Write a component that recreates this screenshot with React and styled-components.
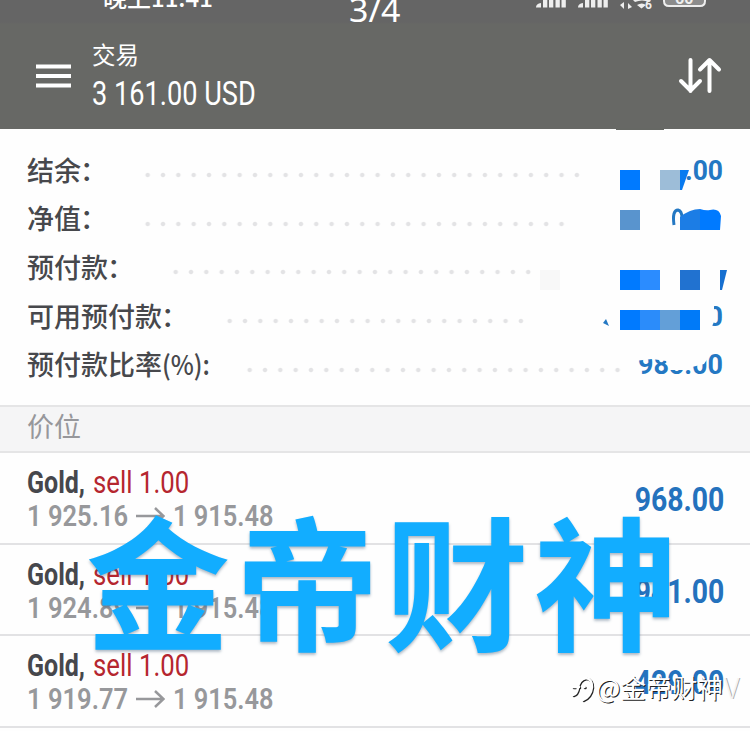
import React from 'react';
import styled, { createGlobalStyle } from 'styled-components';

const Global = createGlobalStyle`
  * { box-sizing: border-box; }
  body { margin: 0; background: #fefefe; overflow: hidden; }
`;

const latin = '"Roboto", "Noto Sans CJK SC", sans-serif';
const cjk = '"Noto Sans CJK SC", sans-serif';

const Screen = styled.main`
  position: relative;
  width: 750px;
  height: 731px;
  overflow: hidden;
  background: #fefefe;
  font-family: ${latin};
`;

const Header = styled.header`
  height: 129px;
  background: linear-gradient(#656565 0 22px, #676865 24px);
  color: #fff;
  overflow: hidden;
`;

const StatusBar = styled.div`
  height: 32px;
  position: relative;
`;

const Clock = styled.span`
  position: absolute;
  left: 103px;
  top: -19px;
  font: 500 24px/32px ${cjk};
  white-space: nowrap;
`;

const Counter = styled.span`
  position: absolute;
  left: 349px;
  top: -10px;
  font: 400 33px/40px "Noto Sans", sans-serif;
  transform: scaleX(1.03);
  transform-origin: left;
`;

const StatusIcons = styled.svg`
  position: absolute;
  left: 530px;
  top: 0;
`;

const Toolbar = styled.div`
  display: flex;
  align-items: flex-start;
  padding: 6px 28px 0 36px;
`;

const MenuIcon = styled.svg`
  margin-top: 25px;
`;

const Titles = styled.div`
  flex: 1;
  margin-left: 21px;
`;

const Title = styled.div`
  font: 400 23.5px/32px ${cjk};
`;

const Balance = styled.div`
  font-size: 33.5px;
  line-height: 48px;
`;

const SortIcon = styled.svg`
  margin-top: 18px;
`;

const Fit = styled.span`
  display: inline-block;
  white-space: pre;
  transform: scaleX(${p => p.$x});
  transform-origin: ${p => p.$from || 'left'} center;
`;

const Summary = styled.section`
  position: relative;
  height: 276px;
  padding-top: 16.5px;
`;

const SummaryRow = styled.div`
  height: 48.6px;
  display: flex;
  align-items: center;
`;

const Label = styled.div`
  width: ${p => p.$w}px;
  padding-left: 27px;
  font: 500 27px/48px ${cjk};
  color: #47484c;
  white-space: nowrap;
`;

const Colon = styled.span`
  margin-left: -1px;
`;

const Dots = styled.div`
  width: ${p => p.$n * 15.33}px;
  height: 6px;
  margin-top: 11px;
  background: radial-gradient(circle, #e3e3e5 0 1.7px, transparent 2.7px) 0 0 / 15.33px 6px repeat-x;
`;

const Redaction = styled.svg`
  position: absolute;
  left: 530px;
  top: -1px;
  font: 700 28px "Roboto", sans-serif;
`;

const SectionTitle = styled.h2`
  height: 48px;
  margin: 0;
  padding-left: 27px;
  border-top: 2px solid #e5e5e6;
  border-bottom: 2px solid #e5e5e6;
  background: #f5f5f6;
  font: 400 27px/38px ${cjk};
  color: #97979b;
`;

const Position = styled.article`
  height: 91.7px;
  display: flex;
  justify-content: space-between;
  padding: 12px 26px 0 27px;
  border-bottom: 2px solid #e2e2e4;
`;

const Deal = styled.div`
  font-size: 30.5px;
  line-height: 36px;
  height: 36px;
  display: flex;
  color: #46474c;
`;

const Part = styled.div`
  width: ${p => p.$w}px;
  white-space: nowrap;
  font-weight: ${p => p.$bold ? 700 : 400};
  color: ${p => p.$sell ? '#b5262f' : 'inherit'};
`;

const Prices = styled.div`
  display: flex;
  font-size: 29.5px;
  font-weight: 600;
  line-height: 30px;
  color: #97989b;
`;

const Price = styled.div`
  width: ${p => p.$w}px;
`;

const Arrow = styled.svg`
  flex: none;
  margin-right: 8px;
`;

const Amount = styled.div`
  font-size: 34px;
  line-height: 40px;
  font-weight: 700;
  margin-top: 14px;
  color: #2472bd;
`;

const Watermark = styled.div`
  position: absolute;
  left: 86px;
  top: 477px;
  font: 700 144px/200px ${cjk};
  letter-spacing: 5.4px;
  color: #12adff;
  white-space: nowrap;
  text-shadow: 0 2px 3px rgba(50, 80, 110, .4);
`;

const Signature = styled.div`
  position: absolute;
  left: 570px;
  top: 669px;
  display: flex;
  align-items: center;
  font: 400 25.7px/32px ${cjk};
  color: #fff;
  text-shadow: 1px 1px 0 #222;
  white-space: nowrap;
`;

const Vee = styled.span`
  color: #f4f4f4;
  text-shadow: 1px 0 0 #aaa;
  font: 300 28px/32px "Noto Sans CJK SC", sans-serif;
  margin-left: 1px;
`;

const rows = [
  ['结余', '：', 140, 29],
  ['净值', '：', 140, 28],
  ['预付款', '：', 168, 24],
  ['可用预付款', '：', 222, 20],
  ['预付款比率', '(%):', 242, 25],
];

const positions = [
  ['1 925.16', '968.00'],
  ['1 924.89', '941.00'],
  ['1 919.77', '429.00'],
];

export default function App() {
  return (
    <Screen>
      <Global />
      <Header>
        <StatusBar>
          <Clock>晚上11:41</Clock>
          <Counter>3/4</Counter>
          <StatusIcons width="190" height="16" fill="#eee">
            {[0, 42].map(o => (
              <g key={o} transform={`translate(${o} 0)`}>
                <path d="M6 7.500q0-4 5-4.500v4.500z" />
                {[13, 19, 25.5, 31.5].map(x => <rect key={x} x={x} y="0" width="4.300" height="7.500" />)}
              </g>
            ))}
            <path d="M94 2v7l-4-4zM98 9V3l4 4zM103 0q9-4 18 0l-2 2q-7-3-14 0zM107 5q5-3 9 0l-4.500 3.500z" />
            <text x="115" y="9" fontSize="12" fontWeight="700">6</text>
            <path d="M134 -3v4q0 5 5 5h31q5 0 5-5v-4" fill="#8c8c8c" stroke="#eee" strokeWidth="2" />
            <text x="145" y="3.500" fontSize="16" fontWeight="700">60</text>
          </StatusIcons>
        </StatusBar>
        <Toolbar>
          <MenuIcon width="35" height="26" fill="#fff">
            <rect y="1.500" width="35" height="4" />
            <rect y="11" width="35" height="4" />
            <rect y="20.500" width="35" height="4" />
          </MenuIcon>
          <Titles>
            <Title>交易</Title>
            <Balance><Fit $x={0.811}>3 161.00 USD</Fit></Balance>
          </Titles>
          <SortIcon width="44" height="40" fill="none" stroke="#fff" strokeWidth="4" strokeLinecap="round" strokeLinejoin="round">
            <path d="M12.500 4v31M3 25l9.500 9.500L22 25M31.500 35V4M22 13.500L31.500 4 41 13.500" />
          </SortIcon>
        </Toolbar>
      </Header>

      <Summary>
        {rows.map(([text, tail, w, n]) => (
          <SummaryRow key={text}>
            <Label $w={w}>
              {text}
              {tail === '：' ? <Colon>{tail}</Colon> : <Fit $x={0.91}>{tail}</Fit>}
            </Label>
            <Dots $n={n} />
          </SummaryRow>
        ))}
        <Redaction width="220" height="260" viewBox="530 128 220 260">
          <rect x="616" y="128" width="48" height="2" fill="#666864" />
          <g fill="#2478c3">
            <text x="685" y="180" textLength="38" lengthAdjust="spacingAndGlyphs">.00</text>
            <text x="707" y="326" textLength="16" lengthAdjust="spacingAndGlyphs">0</text>
            <text x="638" y="374" textLength="85" lengthAdjust="spacingAndGlyphs">985.00</text>
          </g>
          <path d="M634 346h74v12l-4 6-12 3-6 3h-16l-4-9-14-2-18 2zM700 303h14v19l-3 6h-11z" fill="#fefefe" />
          <rect x="540" y="270" width="20" height="20" fill="#f8f8f8" />
          <rect x="620" y="170" width="20" height="20" fill="#007aff" />
          <rect x="660" y="170" width="20" height="20" fill="#9dbdd8" />
          <path d="M680 170h9l-7 20h-2z" fill="#087af0" />
          <rect x="620" y="210" width="20" height="20" fill="#5994ce" />
          <path d="M674 225q-2-15 4-15 4 1 4 8" fill="none" stroke="#2478c3" strokeWidth="3" />
          <path d="M680 217q10-8 20-8v21h-20z" fill="#1c7de5" />
          <path d="M700 209q6 2 10 1 9-2 11 6l-1 14h-20z" fill="#007aff" />
          <rect x="620" y="270" width="20" height="20" fill="#007aff" />
          <rect x="640" y="270" width="20" height="20" fill="#2b8cff" />
          <rect x="680" y="270" width="20" height="20" fill="#2172d0" />
          <path d="M720 270h7l-5 20h-2z" fill="#166fd0" />
          <path d="M603 323l3-4 3 7z" fill="#2478c3" />
          <rect x="620" y="310" width="20" height="20" fill="#007aff" />
          <rect x="640" y="310" width="20" height="20" fill="#2b8cfa" />
          <rect x="660" y="310" width="20" height="20" fill="#639fd8" />
          <rect x="680" y="310" width="20" height="20" fill="#007af8" />
        </Redaction>
      </Summary>

      <SectionTitle>价位</SectionTitle>
      {positions.map(([open, profit]) => (
        <Position key={open}>
          <div>
            <Deal>
              <Part $w={66} $bold><Fit $x={0.82}>Gold,</Fit></Part>
              <Part $w={110} $sell><Fit $x={0.845}>sell 1.00</Fit></Part>
            </Deal>
            <Prices>
              <Price $w={109}><Fit $x={0.865}>{open}</Fit></Price>
              <Arrow width="29" height="30" fill="none" stroke="#97989b" strokeWidth="2.500">
                <path d="M0 15h27M19 7l8.500 8-8.500 8" />
              </Arrow>
              <Price $w={109}><Fit $x={0.86}>1 915.48</Fit></Price>
            </Prices>
          </div>
          <Amount><Fit $x={0.835} $from="right">{profit}</Fit></Amount>
        </Position>
      ))}

      <Watermark>金帝财神</Watermark>
      <Signature>
        <svg width="26" height="36" fill="none" strokeLinecap="round">
          <g id="mark" stroke="#222" strokeWidth="2.500" transform="translate(1 1)">
            <path d="M3 26q4-1 5-7 1-9 8-10 6 1 6 9-1 9-9 13M3 18h6M14 18h.5" />
          </g>
          <g stroke="#fff" strokeWidth="2.500">
            <path d="M3 26q4-1 5-7 1-9 8-10 6 1 6 9-1 9-9 13M3 18h6M14 18h.5" />
          </g>
        </svg>
        <span>@金帝财神</span><Vee>V</Vee>
      </Signature>
    </Screen>
  );
}
